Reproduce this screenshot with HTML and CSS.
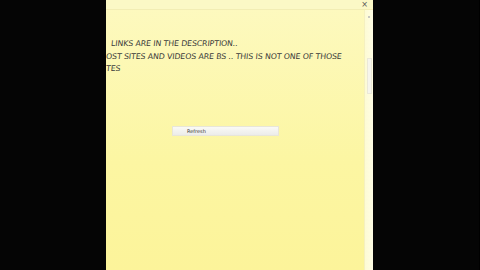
FILE: index.html
```html
<!DOCTYPE html>
<html lang="en">
<head>
  <meta charset="UTF-8">
  <title>Sticky Note</title>
  <link rel="stylesheet" href="styles.css">
</head>
<body>
  <div class="side"></div>

  <!-- The note window -->
  <div class="note">
    <div class="note-head">
      <span class="close">&times;</span>
    </div>
    <div class="note-body">
      <div class="note-text">
        <p class="line first">LINKS ARE IN THE DESCRIPTION..</p>
        <p class="line">OST SITES AND VIDEOS ARE BS .. THIS IS NOT ONE OF THOSE</p>
        <p class="line">TES</p>
        <div class="btn-row">
          <button class="refresh">Refresh</button>
        </div>
      </div>
      <div class="scroll">
        <span class="arrow"></span>
        <div class="thumb"></div>
      </div>
    </div>
  </div>

  <div class="side"></div>
</body>
</html>
```

FILE: styles.css
```css
* {
  margin: 0;
  padding: 0;
  box-sizing: border-box;
}

body {
  background-color: #000;
  display: flex;
  height: 270px;
  overflow: hidden;
  font-family: "DejaVu Sans", sans-serif;
}

.side {
  width: 106px;
  background-color: #050505;
}

/* Note window */
.note {
  width: 267px;
  display: flex;
  flex-direction: column;
  background: linear-gradient(#fdf9c0, #fcf6a2 60%, #fcf49a);
}

.note-head {
  height: 10px;
  background-color: #fbf8c6;
  border-bottom: 1px solid #f2edb4;
  display: flex;
  justify-content: flex-end;
  align-items: center;
  padding-right: 5px;
}

.close {
  font-size: 8px;
  color: #555;
  line-height: 8px;
}

.note-body {
  flex: 1;
  display: flex;
}

.note-text {
  flex: 1;
  padding-top: 28px;
  overflow: hidden;
}

.line {
  font-size: 7.8px;
  color: #3a3a3a;
  line-height: 12.5px;
  white-space: nowrap;
  transform: skewX(-6deg);
  letter-spacing: -0.1px;
}

.line.first {
  padding-left: 5px;
}

.btn-row {
  padding-top: 42px;
  padding-left: 66px;
}

.refresh {
  width: 107px;
  height: 10px;
  border: 1px solid #e8e6d8;
  background: linear-gradient(#fafaf6, #ececea);
  font-family: "DejaVu Sans", sans-serif;
  font-size: 5px;
  color: #333;
  text-align: left;
  padding-left: 14px;
  line-height: 8px;
}

.scroll {
  width: 9px;
  background: linear-gradient(90deg, #fdfbd4, #fffde4);
  border-left: 1px solid #f5f0c0;
  display: flex;
  flex-direction: column;
  align-items: center;
  padding-top: 6px;
}

.arrow {
  width: 2px;
  height: 2px;
  background-color: #c8c8c0;
}

.thumb {
  width: 5px;
  height: 36px;
  margin-top: 40px;
  border: 1px solid #ebe9d8;
  background-color: #f6f5ec;
}
```
